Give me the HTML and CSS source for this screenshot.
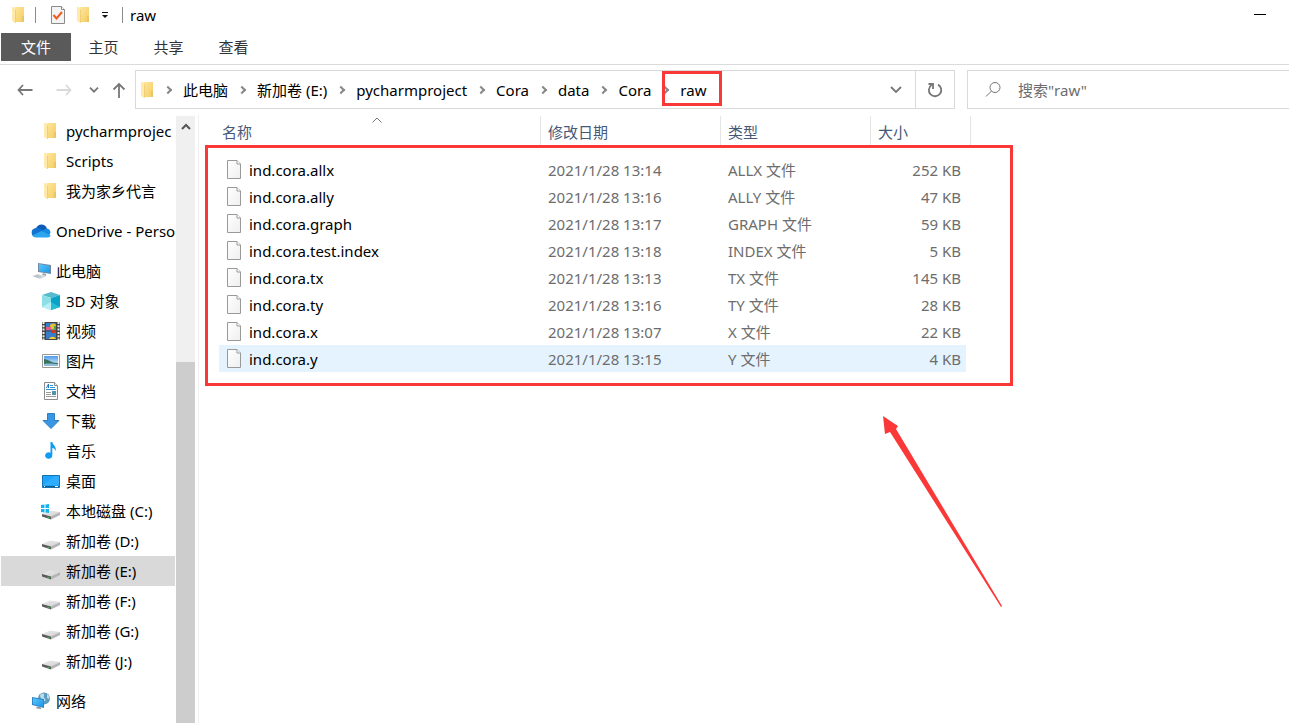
FILE: index.html
```
<!DOCTYPE html>
<html lang="zh-CN">
<head>
<meta charset="utf-8">
<title>raw</title>
<link rel="stylesheet" href="styles.css">
</head>
<body>
<svg class="defs" aria-hidden="true">
  <defs>
    <linearGradient id="gold" x1="0" x2="1" y1="0" y2="1"><stop offset="0" stop-color="#ffe69b"/><stop offset="1" stop-color="#f3cd63"/></linearGradient>
    <linearGradient id="blue" x1="0" x2="1" y1="0" y2="1"><stop offset="0" stop-color="#5cc8fb"/><stop offset="1" stop-color="#1b96e8"/></linearGradient>
    <linearGradient id="paper" x1="0" x2="1" y1="0" y2="1"><stop offset="0" stop-color="#ffffff"/><stop offset="1" stop-color="#efefef"/></linearGradient>
    <linearGradient id="sky" x1="0" x2="0" y1="0" y2="1"><stop offset="0" stop-color="#4f9be8"/><stop offset="1" stop-color="#e9f5ff"/></linearGradient>
    <linearGradient id="metal" x1="0" x2="1" y1="0" y2="1"><stop offset="0" stop-color="#ececec"/><stop offset="1" stop-color="#d0d0d2"/></linearGradient>
  </defs>
  <symbol id="i-folder" viewBox="0 0 12 18"><path d="M3 1h9v15H3z" fill="url(#gold)"/><path d="M10 10h2v6h-2z" fill="#e9c565"/><path d="M0 1h2l2 2v14H3L0 15z" fill="#ffe9ac"/><path d="M3.500 3.500v13" stroke="#f0cf78"/></symbol>
  <symbol id="i-page" viewBox="0 0 16 20"><path d="M1.500.5h9.500l3.500 3.500v14.500h-13z" fill="url(#paper)" stroke="#999"/><path d="M11 .5V4h3.500" fill="#fff" stroke="#999"/></symbol>
  <symbol id="i-drive" viewBox="0 0 20 18"><path d="M10 14l9-4v3l-9 4.500z" fill="#b4b4b6"/><path d="M1 12l8-3.500 10 1.500-9 4.500z" fill="url(#metal)"/><path d="M1 12l9 2.500v3l-9-3z" fill="#5a5a5a"/><path d="M6.500 14.800l2 .6v1.200l-2-.6z" fill="#3fc84f"/></symbol>
</svg>

<header class="titlebar">
  <svg class="folder" aria-hidden="true"><use href="#i-folder"/></svg>
  <span class="divider divider-quick"></span>
  <button class="icon-button" aria-label="属性"><svg width="16" height="20" viewBox="0 0 16 20"><path d="M1.500 1.500h10l3 3v14h-13z" fill="#f4f4f4" stroke="#8b8b8b"/><path d="M11.500 1.500v3h3" fill="#fff" stroke="#8b8b8b"/><path d="M3.500 10l3 3.500L12 7" fill="none" stroke="#ef5b1c" stroke-width="2"/></svg></button>
  <button class="icon-button quick-folder" aria-label="新建文件夹"><svg class="folder"><use href="#i-folder"/></svg></button>
  <button class="icon-button" aria-label="自定义快速访问工具栏"><svg width="8" height="8" viewBox="0 0 8 8"><path d="M1 1h6v1H1zM1 4h6L4 7z" fill="#111"/></svg></button>
  <span class="divider divider-title"></span>
  <h1 class="title">raw</h1>
  <button class="icon-button minimize" aria-label="最小化"><svg width="12" height="12" viewBox="0 0 12 12"><path d="M0 5.500h12" stroke="#000"/></svg></button>
</header>

<nav class="ribbon" aria-label="功能区">
  <button class="tab tab-file">文件</button>
  <button class="tab">主页</button>
  <button class="tab">共享</button>
  <button class="tab">查看</button>
</nav>

<div class="navbar">
  <div class="history">
    <button class="icon-button" aria-label="后退"><svg width="16" height="14" viewBox="0 0 16 14"><path d="M15.500 7H1.500M6 2L1.500 7 6 12" fill="none" stroke="#777" stroke-width="1.800"/></svg></button>
    <button class="icon-button forward" aria-label="前进"><svg width="16" height="14" viewBox="0 0 16 14"><path d="M.5 7h14M10 2l4.500 5-4.500 5" fill="none" stroke="#d9d9d9" stroke-width="1.800"/></svg></button>
    <button class="icon-button recent" aria-label="最近的位置"><svg width="10" height="6" viewBox="0 0 10 6"><path d="M1 .7l4 4 4-4" fill="none" stroke="#777" stroke-width="1.800"/></svg></button>
    <button class="icon-button" aria-label="向上"><svg width="14" height="18" viewBox="0 0 14 18"><path d="M7 17V3M1.500 8.500L7 3l5.500 5.500" fill="none" stroke="#777" stroke-width="1.800"/></svg></button>
  </div>
  <div class="address">
    <svg class="folder" aria-hidden="true"><use href="#i-folder"/></svg>
    <ol class="crumbs">
      <li class="crumb"><a href="#">此电脑</a></li>
      <li class="crumb"><a href="#">新加卷 (E:)</a></li>
      <li class="crumb"><a href="#">pycharmproject</a></li>
      <li class="crumb"><a href="#">Cora</a></li>
      <li class="crumb"><a href="#">data</a></li>
      <li class="crumb"><a href="#">Cora</a></li>
      <li class="crumb crumb-marked"><a href="#">raw</a></li>
    </ol>
    <button class="icon-button address-drop" aria-label="以前的位置"><svg width="12" height="8" viewBox="0 0 12 8"><path d="M1 1l5 5 5-5" fill="none" stroke="#777" stroke-width="1.800"/></svg></button>
    <button class="icon-button refresh" aria-label="刷新"><svg width="16" height="16" viewBox="0 0 16 16"><path d="M11 2.600a6.200 6.200 0 1 1-6.500.4" fill="none" stroke="#777" stroke-width="1.800"/><path d="M1.500 2h4.500v5" fill="none" stroke="#777" stroke-width="1.800"/></svg></button>
  </div>
  <label class="search">
    <svg width="17" height="17" viewBox="0 0 17 17" aria-hidden="true"><circle cx="10" cy="6.500" r="5" fill="none" stroke="#777"/><path d="M6.500 10L1 15.500" stroke="#777"/></svg>
    <input class="search-input" type="text" aria-label="搜索" placeholder="搜索&quot;raw&quot;">
  </label>
</div>

<main class="body">
  <nav class="tree" aria-label="导航窗格">
    <ul class="group">
      <li class="node child"><svg class="icon"><use href="#i-folder" width="16" height="18"/></svg><a href="#">pycharmprojec</a></li>
      <li class="node child"><svg class="icon"><use href="#i-folder" width="16" height="18"/></svg><a href="#">Scripts</a></li>
      <li class="node child"><svg class="icon"><use href="#i-folder" width="16" height="18"/></svg><a href="#">我为家乡代言</a></li>
    </ul>
    <ul class="group">
      <li class="node"><svg class="icon-wide" viewBox="0 0 20 18"><path d="M5 6.500C7 1 14 1 16 6.500L11 10z" fill="#0a5cb8"/><path d="M4.500 15A4.500 4.500 0 0 1 4 6.200c2-.8 3.600-.5 5 .4L13 9 3 15z" fill="#1172cf"/><path d="M9.500 10L13 7.500c3-2.500 6.500 0 6.500 3L18 14z" fill="#1789de"/><path d="M1.200 13.500L10.500 9l9.200 4.500A3 3 0 0 1 17 15.500H5a4.500 4.500 0 0 1-3.800-2z" fill="#2aa6ee"/></svg><a href="#">OneDrive - Perso</a></li>
    </ul>
    <ul class="group">
      <li class="node"><svg class="icon-wide" viewBox="0 0 20 18"><path d="M7 1l13 2v9L7 10z" fill="#6e8ba3"/><path d="M8 2l11 2v7L8 9z" fill="url(#blue)"/><path d="M12 11l3 1v2l-4-1z" fill="#9da7af"/><path d="M1 14l6-2 8 2.500L9 17z" fill="#d4dade"/><path d="M3 14l5 1.500M5 13.400l5 1.500" stroke="#9ba5ad" stroke-width=".6"/></svg><a href="#">此电脑</a></li>
      <li class="node child"><svg class="icon" viewBox="0 0 18 18"><path d="M0 3l9-3 9 3-9 3z" fill="#56bccd"/><path d="M0 3l9 3v12l-9-3z" fill="#8be0e8"/><path d="M9 6l9-3v12l-9 3z" fill="#08a3c7"/><path d="M0 15l9-5v8z" fill="#b9eff2"/><path d="M9 10l9 5-9 3z" fill="#27bcd6"/></svg><a href="#">3D 对象</a></li>
      <li class="node child"><svg class="icon" viewBox="0 0 18 18"><path d="M0 0h18v18H0z" fill="#444"/><path d="M4 1h10v7.500H4zM4 9.500h10V17H4z" fill="#397cc7"/><path d="M1.500 0v18M16.500 0v18" stroke="#eee" stroke-width="2" stroke-dasharray="2 1.300"/><circle cx="11" cy="4.500" r="3" fill="#ebc02f"/><path d="M4 5h5v3H4z" fill="#e45b87"/><path d="M9 8h4v3H9z" fill="#c8382b"/><path d="M7 17c1-3 6-3 7 0z" fill="#edcf38"/><path d="M12 4h2v4h-2z" fill="#48a44c"/></svg><a href="#">视频</a></li>
      <li class="node child"><svg class="icon" viewBox="0 0 18 18"><path d="M.5 2.500h17v13H.5z" fill="#fff" stroke="#999"/><path d="M2 4h14v10H2z" fill="url(#sky)"/><path d="M2 7c4 0 7 4 14 4v3H2z" fill="#39725a"/><path d="M2 12c5-1 10 0 14 0v2H2z" fill="#8ebbda"/></svg><a href="#">图片</a></li>
      <li class="node child"><svg class="icon" viewBox="0 0 18 18"><path d="M2.500.5h10l3 3v14h-13z" fill="#fff" stroke="#8b8b8b"/><path d="M12.500.5v3h3" fill="#eee" stroke="#8b8b8b"/><path d="M8 3.500h3M8 5.500h5M4 7.500h10" stroke="#2597d8"/><path d="M4.500 6L6.500 2v4" fill="none" stroke="#2175b8"/><path d="M4 10.500h5M4 12.500h5M4 14.500h10" stroke="#999"/><path d="M10 9h4v4h-4z" fill="#5293aa"/></svg><a href="#">文档</a></li>
      <li class="node child"><svg class="icon" viewBox="0 0 18 18"><path d="M5.500 1.500h7v7h4.500L9 16.500 1 8.500h4.500z" fill="#3797e4" stroke="#2d7fc3"/></svg><a href="#">下载</a></li>
      <li class="node child"><svg class="icon" viewBox="0 0 18 18"><path d="M8.500 0h1.800c.4 3 4.200 4 3.500 9-1-2-2-3-3.500-3v7.500a3.600 3.300 0 1 1-1.800-2.800z" fill="#119cf1"/></svg><a href="#">音乐</a></li>
      <li class="node child"><svg class="icon" viewBox="0 0 18 18"><path d="M.5 3.500h17v12H.5z" fill="#1ca5fb" stroke="#1573b3"/><path d="M1 13L13 4h4v9z" fill="#44b8ff" opacity=".5"/><path d="M1 14.500h16" stroke="#145b8a"/><path d="M2 14.500h1M13 14.500h3" stroke="#fff"/></svg><a href="#">桌面</a></li>
      <li class="node child"><svg class="icon-wide" viewBox="0 0 20 18"><use href="#i-drive" width="20" height="18"/><path d="M0 3l3.500-.5V6H0zM4.500 2.400L8 2v4H4.500zM0 7h3.500v3.500L0 10zM4.500 7H8v4l-3.500-.4z" fill="#14b2ee"/></svg><a href="#">本地磁盘 (C:)</a></li>
      <li class="node child"><svg class="icon-wide"><use href="#i-drive"/></svg><a href="#">新加卷 (D:)</a></li>
      <li class="node child selected"><svg class="icon-wide"><use href="#i-drive"/></svg><a href="#">新加卷 (E:)</a></li>
      <li class="node child"><svg class="icon-wide"><use href="#i-drive"/></svg><a href="#">新加卷 (F:)</a></li>
      <li class="node child"><svg class="icon-wide"><use href="#i-drive"/></svg><a href="#">新加卷 (G:)</a></li>
      <li class="node child"><svg class="icon-wide"><use href="#i-drive"/></svg><a href="#">新加卷 (J:)</a></li>
    </ul>
    <ul class="group">
      <li class="node"><svg class="icon-wide" viewBox="0 0 20 18"><circle cx="13" cy="6.500" r="6" fill="#5b9bc0"/><path d="M9 3c3-3 5-1 4 1s3 3 1 5-5-3-5-6zM16 2c2 1 3 3 2 5l-2-1z" fill="#b8dceb"/><path d="M1 5l12 2v9L1 13z" fill="#2e86ca"/><path d="M2 6.200l10 1.700v6.800L2 12.200z" fill="url(#blue)"/><path d="M6 14.500l4 1v1.800l-5-1z" fill="#8c9da8"/></svg><a href="#">网络</a></li>
    </ul>
  </nav>
  <div class="scrollbar" aria-hidden="true">
    <svg class="scroll-up" width="10" height="7" viewBox="0 0 10 7"><path d="M1 6l4-4 4 4" fill="none" stroke="#555" stroke-width="2"/></svg>
    <div class="thumb"></div>
  </div>

  <section class="files" aria-label="文件列表">
    <table class="list">
      <colgroup><col class="col-name"><col class="col-date"><col class="col-type"><col class="col-size"></colgroup>
      <thead>
        <tr><th class="sorted">名称<svg class="sort" width="10" height="6" viewBox="0 0 10 6"><path d="M.5 5.500L5 1l4.500 4.500" fill="none" stroke="#777"/></svg></th><th>修改日期</th><th>类型</th><th>大小</th></tr>
      </thead>
      <tbody>
        <tr><td><span class="file"><svg class="page"><use href="#i-page"/></svg>ind.cora.allx</span></td><td>2021/1/28 13:14</td><td>ALLX 文件</td><td>252 KB</td></tr>
        <tr><td><span class="file"><svg class="page"><use href="#i-page"/></svg>ind.cora.ally</span></td><td>2021/1/28 13:16</td><td>ALLY 文件</td><td>47 KB</td></tr>
        <tr><td><span class="file"><svg class="page"><use href="#i-page"/></svg>ind.cora.graph</span></td><td>2021/1/28 13:17</td><td>GRAPH 文件</td><td>59 KB</td></tr>
        <tr><td><span class="file"><svg class="page"><use href="#i-page"/></svg>ind.cora.test.index</span></td><td>2021/1/28 13:18</td><td>INDEX 文件</td><td>5 KB</td></tr>
        <tr><td><span class="file"><svg class="page"><use href="#i-page"/></svg>ind.cora.tx</span></td><td>2021/1/28 13:13</td><td>TX 文件</td><td>145 KB</td></tr>
        <tr><td><span class="file"><svg class="page"><use href="#i-page"/></svg>ind.cora.ty</span></td><td>2021/1/28 13:16</td><td>TY 文件</td><td>28 KB</td></tr>
        <tr><td><span class="file"><svg class="page"><use href="#i-page"/></svg>ind.cora.x</span></td><td>2021/1/28 13:07</td><td>X 文件</td><td>22 KB</td></tr>
        <tr class="hover"><td><span class="file"><svg class="page"><use href="#i-page"/></svg>ind.cora.y</span></td><td>2021/1/28 13:15</td><td>Y 文件</td><td>4 KB</td></tr>
      </tbody>
    </table>
    <div class="mark-box"></div>
    <svg class="mark-arrow" width="120" height="192" viewBox="0 0 120 192"><path d="M1 1l15 10-2 3 106 177-1 1L8 17l-5 2z" fill="#fb3838"/></svg>
  </section>
</main>
</body>
</html>
```
FILE: styles.css
```
* { box-sizing: border-box; }

body {
  margin: 0;
  height: 100vh;
  display: flex;
  flex-direction: column;
  overflow: hidden;
  background: #fff;
  color: #000;
  font-family: "Noto Sans", "Noto Sans CJK SC", sans-serif;
  font-size: 15px;
  line-height: 20px;
}

button, input { font: inherit; color: inherit; }
a { color: inherit; text-decoration: none; }
ul, ol { list-style: none; margin: 0; padding: 0; }
svg { display: block; flex: none; }

.defs { position: absolute; width: 0; height: 0; }

.icon-button {
  display: flex;
  align-items: center;
  justify-content: center;
  padding: 0;
  border: 0;
  background: none;
}

.folder { width: 12px; height: 18px; }

.titlebar {
  display: flex;
  align-items: center;
  height: 29px;
  padding: 0 23px 0 12px;
}
.divider { width: 1px; height: 16px; background: #8a8a8a; }
.divider-quick { margin: 0 14px 0 11px; }
.quick-folder { margin: 0 12px 0 11px; }
.divider-title { margin: 0 7px 0 13px; }
.title { margin: 0; font-size: 15px; font-weight: 400; }
.minimize { margin-left: auto; }

.ribbon {
  display: flex;
  height: 36px;
  padding: 4px 0 3px 1px;
  border-bottom: 1px solid #dadbdc;
}
.tab {
  width: 65px;
  padding: 0;
  border: 0;
  background: none;
  color: #333;
}
.tab-file { width: 70px; background: #5a5a5a; color: #fff; }

.navbar {
  display: grid;
  grid-template-columns: 135px minmax(0, 832fr) minmax(0, 322fr);
  align-items: center;
  padding: 5px 0 6px;
}
.history {
  display: flex;
  align-items: center;
  padding-left: 17px;
}
.forward { margin: 0 17px 0 23px; }
.recent { margin-right: 13px; }

.address {
  display: flex;
  align-items: center;
  height: 39px;
  margin-right: 12px;
  padding-left: 5px;
  border: 1px solid #d9d9d9;
}
.crumbs { display: flex; flex: 1; padding-left: 12px; white-space: nowrap; }
.crumb { position: relative; display: flex; align-items: center; }
.crumb::before {
  content: "";
  box-sizing: border-box;
  width: 6px;
  height: 6px;
  margin-right: 12px;
  border: solid #888;
  border-width: 2px 2px 0 0;
  transform: rotate(45deg);
}
.crumb + .crumb { margin-left: 11px; }
.crumb-marked::after {
  content: "";
  position: absolute;
  inset: -9px -16px -6px 0;
  border: 3px solid #fb3838;
}
.address-drop { width: 38px; height: 37px; }
.refresh { width: 39px; height: 37px; border-left: 1px solid #d9d9d9; }

.search {
  display: flex;
  align-items: center;
  gap: 16px;
  height: 39px;
  padding-left: 17px;
  border: 1px solid #d9d9d9;
  border-right: 0;
}
.search-input { flex: 1; min-width: 0; padding: 0; border: 0; outline: 0; background: none; }
.search-input::placeholder { color: #6d6d6d; opacity: 1; }

.body { flex: 1; min-height: 0; display: flex; }

.tree {
  width: 175px;
  padding: 1px 0 0 1px;
  overflow: hidden;
}
.group + .group { margin-top: 10px; }
.node {
  display: flex;
  align-items: center;
  gap: 5px;
  height: 30px;
  padding-left: 30px;
  white-space: nowrap;
}
.child { padding-left: 40px; }
.selected { background: #d9d9d9; }
.icon { width: 18px; height: 18px; margin: 0 1px; }
.icon-wide { width: 20px; height: 18px; }

.scrollbar {
  display: flex;
  flex-direction: column;
  align-items: center;
  width: 19px;
  margin: 1px 3px 0 1px;
  background: #f0f0f0;
}
.scroll-up { margin-top: 7px; }
.thumb { width: 100%; height: calc(100% - 246px); margin-top: auto; background: #cdcdcd; }

.files {
  position: relative;
  flex: 1;
  min-width: 0;
  padding: 1px 0 0 20px;
  border-left: 1px solid #f0f0f0;
}
.list { width: 752px; border-collapse: separate; border-spacing: 0; table-layout: fixed; }
.col-name { width: 322px; }
.col-date { width: 180px; }
.col-type { width: 150px; }
.col-size { width: 100px; }
.list th {
  height: 30px;
  padding: 2px 0 0 7px;
  border-right: 1px solid #e5e5e5;
  color: #44597a;
  font-weight: 400;
  text-align: left;
}
.list .sorted { position: relative; padding-left: 3px; }
.sort { position: absolute; top: 1px; left: 153px; }
.list tbody::before { content: ""; display: block; height: 10px; }
.list td { height: 27px; padding: 0 0 0 7px; color: #6d6d6d; white-space: nowrap; }
.list td:first-child { color: #000; }
.list td:last-child {
  padding-right: 5px;
  border-right: 5px solid transparent;
  background-clip: padding-box;
  text-align: right;
}
.hover td { background-color: #e5f3ff; }
.file { display: flex; align-items: center; gap: 7px; }
.page { width: 16px; height: 20px; }

.mark-box {
  position: absolute;
  top: 30px;
  left: 6px;
  width: 808px;
  height: 241px;
  border: 3px solid #fb3838;
}
.mark-arrow { position: absolute; top: 300px; left: 683px; }
```
